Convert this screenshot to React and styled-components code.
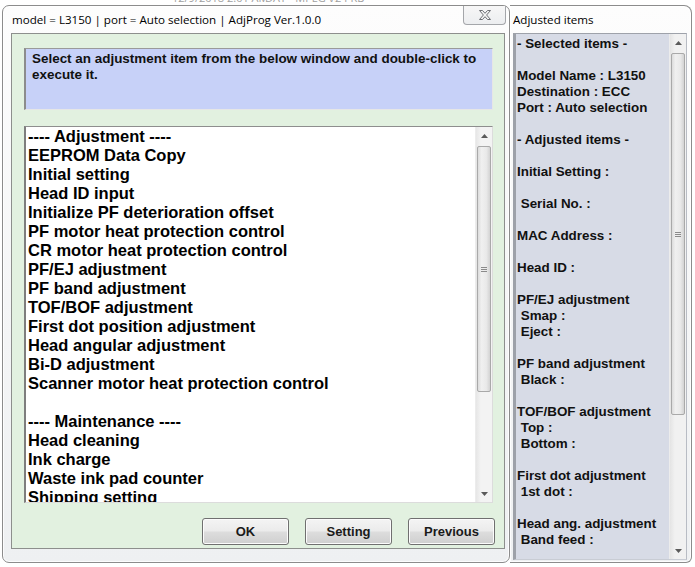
import styled, { createGlobalStyle } from "styled-components";

const GlobalStyle = createGlobalStyle`
  html, body {
    margin: 0;
    padding: 0;
    background: #ffffff;
  }
  * {
    box-sizing: border-box;
  }
`;

const Screen = styled.div`
  width: 695px;
  height: 567px;
  overflow: hidden;
  background: #ffffff;
  font-family: "Liberation Sans", Arial, sans-serif;
`;

const BehindStrip = styled.div`
  height: 5px;
  overflow: hidden;
`;

const BehindText = styled.div`
  display: flex;
  margin-top: -9px;
  padding-left: 172px;
  font-family: "Open Sans", sans-serif;
  font-size: 11px;
  line-height: 14px;
  color: #a0a0a0;
  white-space: pre;
`;

const BehindCell = styled.span`
  flex: none;
  width: ${(p) => p.$w}px;
  overflow: hidden;
`;

const Desktop = styled.div`
  display: flex;
  align-items: flex-start;
  padding-left: 2px;
`;

const Window = styled.div`
  display: flex;
  flex-direction: column;
  width: ${(p) => p.$w}px;
  height: ${(p) => p.$h}px;
  background: linear-gradient(180deg, #fdfdfd 0%, #f4f5f6 60%, #eef0f2 100%);
  border: 1px solid #8c8c8c;
  border-radius: 7px;
  position: relative;
  z-index: ${(p) => p.$z || 0};
  box-shadow: 0 0 0 1px rgba(255, 255, 255, 0.8) inset;
`;

const SideWindow = styled(Window)`
  border-left: none;
  border-radius: 0 8px 6px 0;
`;

const TitleBar = styled.div`
  display: flex;
  justify-content: space-between;
  align-items: flex-start;
  height: 27px;
  padding-left: ${(p) => p.$pl}px;
`;

const TitleText = styled.div`
  margin-top: 6px;
  font-family: "Open Sans", "Noto Sans", sans-serif;
  font-size: 11.6px;
  line-height: 16px;
  color: #000000;
  white-space: nowrap;
`;

const CloseButton = styled.div`
  display: flex;
  align-items: center;
  justify-content: center;
  width: 43px;
  height: 19px;
  margin-right: 3px;
  border: 1px solid #a4a6aa;
  border-top: none;
  border-radius: 0 0 4px 4px;
  background: linear-gradient(180deg, #f7f7f7 0%, #eceef0 100%);
`;

const ClientArea = styled.div`
  display: flex;
  flex-direction: column;
  margin: 0 4px 0 8px;
  height: 516px;
  padding: 14px 10px 0 12px;
  background: #e2f1e0;
  border: 1px solid #8d8f8d;
`;

const InfoBox = styled.div`
  width: 469px;
  height: 62px;
  padding: 2px 6px;
  background: #c7d1f8;
  border-top: 1px solid #9a9a9a;
  border-left: 2px solid #8c8c8c;
  border-right: 1px solid #e6e6e6;
  border-bottom: 1px solid #e6e6e6;
  font-size: 13.45px;
  font-weight: bold;
  line-height: 16px;
  color: #111111;
`;

const ListBox = styled.div`
  display: flex;
  width: 469px;
  height: 377px;
  margin-top: 16px;
  background: #ffffff;
  border-top: 1px solid #8e8e8e;
  border-left: 2px solid #7e7e7e;
  border-right: 1px solid #dcdcdc;
  border-bottom: 1px solid #dcdcdc;
`;

const ItemColumn = styled.div`
  flex: 1;
  overflow: hidden;
  padding: 0 0 0 2px;
`;

const Item = styled.div`
  height: 19px;
  font-size: 16.5px;
  font-weight: bold;
  line-height: 19px;
  color: #000000;
  white-space: pre;
`;

const ScrollBar = styled.div`
  display: flex;
  flex-direction: column;
  width: 17px;
  background: linear-gradient(90deg, #e6e6e6 0%, #f3f3f3 30%, #f3f3f3 100%);
  border-left: 1px solid #ececec;
`;

const ArrowCell = styled.div`
  display: flex;
  align-items: center;
  justify-content: center;
  height: 17px;
  flex: none;
`;

const Thumb = styled.div`
  display: flex;
  align-items: center;
  justify-content: center;
  flex: none;
  height: ${(p) => p.$h}px;
  margin: 2px 1px 0 1px;
  border: 1px solid #a9a9a9;
  border-radius: 2px;
  background: linear-gradient(90deg, #dcdcdc 0%, #f0f0f0 30%, #e9e9e9 70%, #d3d3d3 100%);
`;

const Grip = styled.div`
  display: flex;
  flex-direction: column;
  gap: 1px;
`;

const GripLine = styled.span`
  display: block;
  width: 6px;
  height: 1px;
  background: #8a8a8a;
`;

const Spacer = styled.div`
  flex: 1;
`;

const ButtonRow = styled.div`
  display: flex;
  justify-content: flex-end;
  gap: 16px;
  margin-top: 15px;
  width: 471px;
`;

const DlgButton = styled.div`
  display: flex;
  align-items: center;
  justify-content: center;
  width: 87px;
  height: 27px;
  border: 1px solid #707070;
  border-radius: 3px;
  background: linear-gradient(180deg, #f4f4f4 0%, #ebebeb 48%, #dddddd 52%, #cfcfcf 100%);
  box-shadow: inset 0 0 0 1px #fcfcfc;
  font-size: 13px;
  font-weight: bold;
  color: #1a1a1a;
`;

const SidePanel = styled.div`
  display: flex;
  height: 527px;
  margin: 0 4px 0 3px;
  background: #d7dbe6;
  border-top: 1px solid #9ea2aa;
  border-left: 3px solid #9da1a9;
  border-right: 1px solid #b8bcc4;
  border-bottom: 1px solid #c8ccd4;
`;

const SideText = styled.div`
  flex: 1;
  overflow: hidden;
  padding: 2px 0 0 1px;
`;

const SideLine = styled.div`
  height: 16px;
  font-size: 13.4px;
  font-weight: bold;
  line-height: 16px;
  color: #111111;
  white-space: pre;
`;

const SideScroll = styled(ScrollBar)`
  background: linear-gradient(90deg, #e4e4e4 0%, #f1f1f1 30%, #f1f1f1 100%);
`;

const listItems = [
  "---- Adjustment ----",
  "EEPROM Data Copy",
  "Initial setting",
  "Head ID input",
  "Initialize PF deterioration offset",
  "PF motor heat protection control",
  "CR motor heat protection control",
  "PF/EJ adjustment",
  "PF band adjustment",
  "TOF/BOF adjustment",
  "First dot position adjustment",
  "Head angular adjustment",
  "Bi-D adjustment",
  "Scanner motor heat protection control",
  "",
  "---- Maintenance ----",
  "Head cleaning",
  "Ink charge",
  "Waste ink pad counter",
  "Shipping setting",
];

const sideLines = [
  "- Selected items -",
  "",
  "Model Name : L3150",
  "Destination : ECC",
  "Port : Auto selection",
  "",
  "- Adjusted items -",
  "",
  "Initial Setting :",
  "",
  " Serial No. :",
  "",
  "MAC Address :",
  "",
  "Head ID :",
  "",
  "PF/EJ adjustment",
  " Smap :",
  " Eject :",
  "",
  "PF band adjustment",
  " Black :",
  "",
  "TOF/BOF adjustment",
  " Top :",
  " Bottom :",
  "",
  "First dot adjustment",
  " 1st dot :",
  "",
  "Head ang. adjustment",
  " Band feed :",
];

const UpArrow = () => (
  <svg width="7" height="4" viewBox="0 0 7 4">
    <path d="M0 4 L3.5 0 L7 4 Z" fill="#5a5a5a" />
  </svg>
);

const DownArrow = () => (
  <svg width="7" height="4" viewBox="0 0 7 4">
    <path d="M0 0 L3.5 4 L7 0 Z" fill="#5a5a5a" />
  </svg>
);

const CloseGlyph = () => (
  <svg width="14" height="12" viewBox="0 0 14 12">
    <path
      d="M1.5 1.5 H4.5 L7 4.3 L9.5 1.5 H12.5 L8.6 6 L12.5 10.5 H9.5 L7 7.7 L4.5 10.5 H1.5 L5.4 6 Z"
      fill="#f4f4f4"
      stroke="#6e7075"
      strokeWidth="1"
      strokeLinejoin="round"
    />
  </svg>
);

const Scroller = ({ as: Comp = ScrollBar, thumbTop, thumbHeight }) => (
  <Comp>
    <ArrowCell>
      <UpArrow />
    </ArrowCell>
    <Thumb $h={thumbHeight} style={{ marginTop: thumbTop }}>
      <Grip>
        <GripLine />
        <GripLine />
        <GripLine />
      </Grip>
    </Thumb>
    <Spacer />
    <ArrowCell>
      <DownArrow />
    </ArrowCell>
  </Comp>
);

export default function App() {
  return (
    <Screen>
      <GlobalStyle />
      <BehindStrip>
        <BehindText>
          <BehindCell $w={93}>12/9/2018 2:01 AM</BehindCell>
          <BehindCell $w={70}>DAT - MPEG vide</BehindCell>
          <BehindCell $w={40}>24 KB</BehindCell>
        </BehindText>
      </BehindStrip>
      <Desktop>
        <Window $w={508} $h={558} $z={2}>
          <TitleBar $pl={9}>
            <TitleText>model = L3150 | port = Auto selection | AdjProg Ver.1.0.0</TitleText>
            <CloseButton>
              <CloseGlyph />
            </CloseButton>
          </TitleBar>
          <ClientArea>
            <InfoBox>
              Select an adjustment item from the below window and double-click to
              execute it.
            </InfoBox>
            <ListBox>
              <ItemColumn>
                {listItems.map((t, i) => (
                  <Item key={i}>{t}</Item>
                ))}
              </ItemColumn>
              <Scroller thumbTop={2} thumbHeight={246} />
            </ListBox>
            <ButtonRow>
              <DlgButton>OK</DlgButton>
              <DlgButton>Setting</DlgButton>
              <DlgButton>Previous</DlgButton>
            </ButtonRow>
          </ClientArea>
        </Window>
        <SideWindow $w={182} $h={558} $z={1}>
          <TitleBar $pl={3}>
            <TitleText>Adjusted items</TitleText>
          </TitleBar>
          <SidePanel>
            <SideText>
              {sideLines.map((t, i) => (
                <SideLine key={i}>{t}</SideLine>
              ))}
            </SideText>
            <Scroller as={SideScroll} thumbTop={2} thumbHeight={362} />
          </SidePanel>
        </SideWindow>
      </Desktop>
    </Screen>
  );
}
